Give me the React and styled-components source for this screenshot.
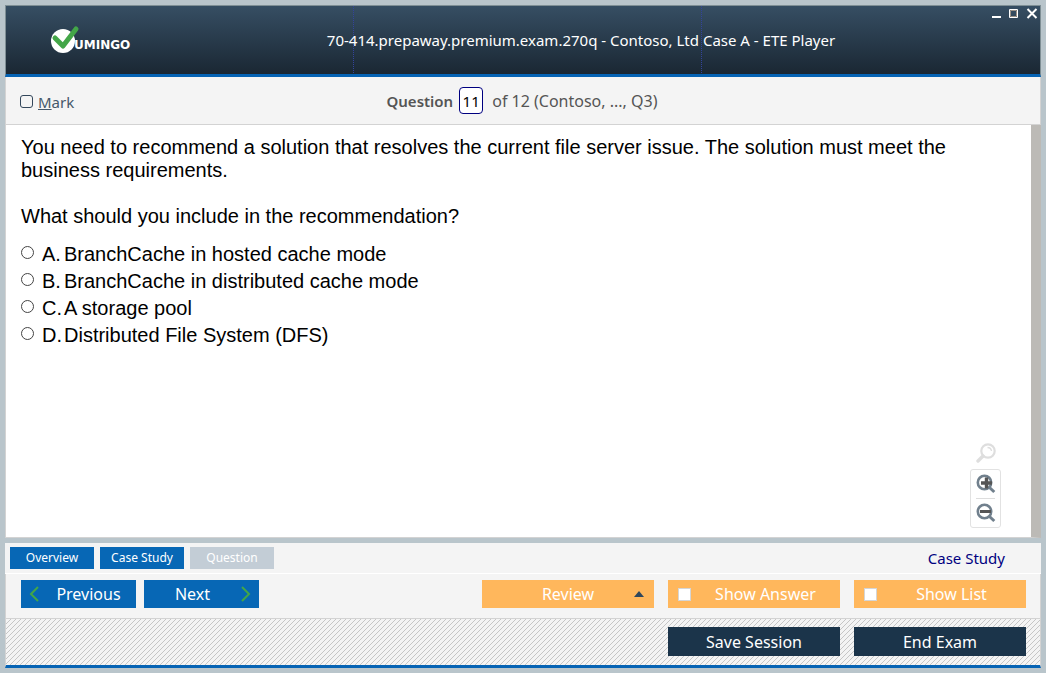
import React from 'react';
import styled, { createGlobalStyle, css } from 'styled-components';

const GlobalStyle = createGlobalStyle`
  *, *::before, *::after { box-sizing: border-box; }
  body {
    margin: 0;
    background: #b9c5cb;
    font-family: "Noto Sans", "Open Sans", sans-serif;
    font-size: 15px;
    line-height: 20px;
  }
  button, input { font: inherit; margin: 0; }
  p { margin: 0; }
`;

const Window = styled.div`
  display: flex;
  flex-direction: column;
  min-height: 100vh;
  padding: 5px;
`;

const Header = styled.header`
  display: grid;
  grid-template-columns: auto 1fr auto;
  align-items: center;
  height: 72px;
  padding: 0 0 0 44px;
  border: 1px solid #7f8f95;
  border-bottom: 3px solid #0563b4;
  background:
    linear-gradient(#33449c 1px, transparent 1px) 347px 0 / 1px 2px repeat-y,
    linear-gradient(#33449c 1px, transparent 1px) 695px 0 / 1px 2px repeat-y,
    linear-gradient(#364e63, #1a2733);
`;

const LogoMark = styled.svg`
  display: block;
`;

const Title = styled.h1`
  margin: 0;
  padding-left: 40px;
  color: #fff;
  font-size: 15px;
  font-weight: 400;
  line-height: 20px;
  text-align: center;
`;

const WindowControls = styled.div`
  display: flex;
  align-self: start;
  gap: 4px;
`;

const ControlButton = styled.button`
  display: grid;
  place-items: center;
  width: 14px;
  height: 14px;
  padding: 0;
  border: 0;
  background: none;
`;

const MarkBar = styled.div`
  display: grid;
  grid-template-columns: 1fr auto 1fr;
  align-items: center;
  height: 48px;
  padding: 0 16px 0 14px;
  border: 1px solid #d3d3d3;
  border-top: 0;
  background: #f4f4f4;
  color: #555;
`;

const MarkLabel = styled.label`
  display: flex;
  align-items: center;
  gap: 5px;
  padding-top: 2px;
  color: #45586a;
`;

const MarkBox = styled.input`
  appearance: none;
  width: 13px;
  height: 13px;
  border: 1px solid #33475b;
  border-radius: 3px;
`;

const Position = styled.div`
  display: flex;
  align-items: center;
  font-size: 16px;
`;

const PositionLabel = styled.label`
  font-size: 15px;
  font-weight: 600;
`;

const PositionInput = styled.input`
  width: 24px;
  height: 27px;
  margin: 0 9px 0 6px;
  padding: 0;
  border: 1px solid #000080;
  border-radius: 4px;
  background: #fff;
  color: #000;
  font-size: 15px;
  text-align: center;
`;

const Reading = styled.main`
  position: relative;
  flex: 1;
  padding: 11px 60px 10px 15px;
  border-left: 1px solid #d3d3d3;
  border-right: 10px solid #bcbab6;
  border-bottom: 1px solid #d3d3d3;
  background: #fff;
  color: #000;
  font-family: "Liberation Sans", Arial, sans-serif;
  font-size: 20px;
  line-height: 23px;
`;

const Paragraph = styled.p`
  margin-bottom: 23px;
`;

const Options = styled.fieldset`
  margin: -10px 0 0;
  padding: 0;
  border: 0;
`;

const Option = styled.label`
  display: grid;
  grid-template-columns: 13px 22px 1fr;
  align-items: center;
  height: 27px;

  & > span:first-of-type { margin-left: 8px; white-space: nowrap; }
  & > span:last-of-type { margin-left: 8px; }
`;

const Radio = styled.input`
  appearance: none;
  width: 13px;
  height: 13px;
  align-self: start;
  border: 1px solid #444;
  border-radius: 50%;
  background: #fff;

  && { margin-top: 5px; }
`;

const ZoomTools = styled.div`
  position: absolute;
  right: 30px;
  bottom: 9px;
  display: flex;
  flex-direction: column;
  align-items: center;
  gap: 6px;
`;

const ZoomBox = styled.div`
  display: flex;
  flex-direction: column;
  width: 31px;
  padding: 0 5px;
  border: 1px solid #e2e2e2;
  border-radius: 3px;
`;

const ZoomButton = styled.button`
  display: grid;
  place-items: center;
  height: ${(p) => (p.$bare ? 20 : 28)}px;
  padding: 0;
  border: 0;
  background: none;

  & + & { border-top: 1px solid #ddd; height: 29px; }
`;

const TabBar = styled.nav`
  display: flex;
  align-items: center;
  gap: 6px;
  height: 31px;
  margin-top: 5px;
  padding: 0 36px 0 5px;
  border-bottom: 1px solid #fff;
  box-shadow: 0 -5px 0 #b9c5cb, 0 -6px 0 #fff;
  background: #f4f4f4;
`;

const flatButton = css`
  padding: 0;
  border: 0;
  color: #fff;
`;

const Tab = styled.button`
  ${flatButton}
  width: 84px;
  height: 22px;
  background: #0767b5;
  font-size: 12px;
  line-height: 22px;

  &:disabled { background: #c3cdd6; color: #fff; }
`;

const CaseLink = styled.a`
  margin-left: auto;
  color: #000080;
  text-decoration: none;
`;

const ActionBar = styled.div`
  display: flex;
  gap: 8px;
  height: 45px;
  padding: 6px 14px 0 15px;
  border: 1px solid #d3d3d3;
  border-top: 0;
  background: #f4f4f4;
  font-size: 16px;
`;

const StepButton = styled.button`
  ${flatButton}
  display: flex;
  align-items: center;
  width: 115px;
  height: 28px;
  padding: 0 8px;
  background: #0767b5;

  & > span { flex: 1; text-align: center; }
  & > span:last-child { padding-left: 10px; }
  & > span:first-child { padding-right: 8px; }
`;

const Tools = styled.div`
  display: flex;
  gap: 14px;
  margin-left: auto;
`;

const toolFace = css`
  display: flex;
  align-items: center;
  width: 172px;
  height: 28px;
  padding: 0 10px;
  background: #ffb75c;
  color: #fff;

  & > span { flex: 1; text-align: center; }
`;

const MenuButton = styled.button`
  ${toolFace}
  border: 0;

  & > span { padding-left: 10px; }
`;

const Toggle = styled.label`
  ${toolFace}
  padding-right: 0;
`;

const ToggleBox = styled.input`
  appearance: none;
  width: 13px;
  height: 13px;
  border: 1px solid #d5d5d5;
  background: #fff;
`;

const Footer = styled.footer`
  display: flex;
  justify-content: flex-end;
  gap: 14px;
  height: 49px;
  padding: 8px 14px 0;
  border: 1px solid #d3d3d3;
  border-top: 0;
  border-bottom: 3px solid #0563b4;
  background: linear-gradient(135deg, transparent 42%, #c6c6c6 42%, #c6c6c6 58%, transparent 58%) 0 0 / 5px 5px #f4f4f4;
  font-size: 16px;
`;

const SessionButton = styled.button`
  ${flatButton}
  width: 172px;
  height: 29px;
  background: #1b344a;
`;

const OPTIONS = [
  ['A.', 'BranchCache in hosted cache mode'],
  ['B.', 'BranchCache in distributed cache mode'],
  ['C.', 'A storage pool'],
  ['D.', 'Distributed File System (DFS)'],
];

function Logo() {
  return (
    <LogoMark width="82" height="30" viewBox="0 0 82 30" role="img" aria-label="Vumingo">
      <circle cx="13" cy="16" r="12" fill="#fff" />
      <path d="M5 13l8 8L26 4" fill="none" stroke="#43a648" strokeWidth="5" strokeLinecap="round" strokeLinejoin="round" />
      <text x="24" y="24" fill="#fff" fontFamily="DejaVu Sans" fontWeight="700" fontSize="12">UMINGO</text>
    </LogoMark>
  );
}

function ZoomIcon({ plus }) {
  return (
    <svg width="20" height="20" viewBox="0 0 20 20" fill="none">
      <circle cx="8.5" cy="8.5" r="6.7" stroke="#71808d" strokeWidth="2.6" />
      <path d="M13.5 13.5l4.8 4.5" stroke="#71808d" strokeWidth="3" />
      <path d={plus ? 'M5 9h11M10.5 3.5v11' : 'M4 8.5h11'} stroke="#555" strokeWidth={plus ? 3.4 : 3} />
    </svg>
  );
}

function ResetIcon() {
  return (
    <svg width="20" height="20" viewBox="0 0 20 20" fill="none" stroke="#dedede">
      <circle cx="12" cy="8" r="6.7" strokeWidth="2.2" />
      <path d="M11.5 4.5q3.5 0 4 3.5" strokeWidth="1.3" />
      <path d="M7 13l-5 5" strokeWidth="3.4" strokeLinecap="round" />
    </svg>
  );
}

function Chevron({ d }) {
  return (
    <svg width="10" height="16" viewBox="0 0 10 16" fill="none">
      <path d={d} stroke="#43a648" strokeWidth="2" />
    </svg>
  );
}

export default function App() {
  return (
    <Window>
      <GlobalStyle />
      <Header>
        <Logo />
        <Title>70-414.prepaway.premium.exam.270q - Contoso, Ltd Case A - ETE Player</Title>
        <WindowControls>
          <ControlButton aria-label="Minimize">
            <svg width="14" height="14"><path d="M2 11h9" stroke="#fff" strokeWidth="2" /></svg>
          </ControlButton>
          <ControlButton aria-label="Maximize">
            <svg width="14" height="14" fill="none">
              <path d="M1.5 3.5h8v8h-8z" stroke="#fff" />
              <path d="M2.5 4.5h6v6h-6z" stroke="#9b9186" />
            </svg>
          </ControlButton>
          <ControlButton aria-label="Close">
            <svg width="14" height="14"><path d="M1.5 3l9 9M10.5 3l-9 9" stroke="#fff" strokeWidth="2" /></svg>
          </ControlButton>
        </WindowControls>
      </Header>

      <MarkBar>
        <MarkLabel>
          <MarkBox type="checkbox" />
          <span><u>M</u>ark</span>
        </MarkLabel>
        <Position>
          <PositionLabel htmlFor="position">Question</PositionLabel>
          <PositionInput id="position" defaultValue="11" />
          <span>of 12 (Contoso, ..., Q3)</span>
        </Position>
      </MarkBar>

      <Reading>
        <Paragraph>
          You need to recommend a solution that resolves the current file server issue. The solution must meet the
          business requirements.
        </Paragraph>
        <Paragraph>What should you include in the recommendation?</Paragraph>
        <Options aria-label="Answers">
          {OPTIONS.map(([letter, text]) => (
            <Option key={letter}>
              <Radio type="radio" name="answer" />
              <span>{letter}</span>
              <span>{text}</span>
            </Option>
          ))}
        </Options>
        <ZoomTools>
          <ZoomButton $bare aria-label="Reset zoom"><ResetIcon /></ZoomButton>
          <ZoomBox>
            <ZoomButton aria-label="Zoom in"><ZoomIcon plus /></ZoomButton>
            <ZoomButton aria-label="Zoom out"><ZoomIcon /></ZoomButton>
          </ZoomBox>
        </ZoomTools>
      </Reading>

      <TabBar>
        <Tab>Overview</Tab>
        <Tab>Case Study</Tab>
        <Tab disabled>Question</Tab>
        <CaseLink href="#case-study">Case Study</CaseLink>
      </TabBar>

      <ActionBar>
        <StepButton><Chevron d="M9 1L2 8l7 7" /><span>Previous</span></StepButton>
        <StepButton><span>Next</span><Chevron d="M1 1l7 7-7 7" /></StepButton>
        <Tools>
          <MenuButton aria-haspopup="menu">
            <span>Review</span>
            <svg width="10" height="6" viewBox="0 0 10 6"><path d="M0 6l5-6 5 6z" fill="#2f475c" /></svg>
          </MenuButton>
          <Toggle><ToggleBox type="checkbox" /><span>Show Answer</span></Toggle>
          <Toggle><ToggleBox type="checkbox" /><span>Show List</span></Toggle>
        </Tools>
      </ActionBar>

      <Footer>
        <SessionButton>Save Session</SessionButton>
        <SessionButton>End Exam</SessionButton>
      </Footer>
    </Window>
  );
}
